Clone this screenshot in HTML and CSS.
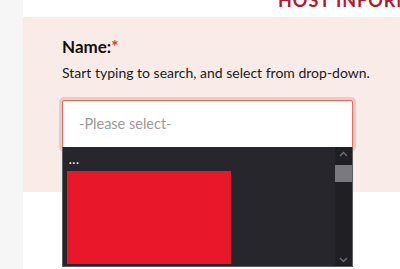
FILE: index.html
```html
<!DOCTYPE html>
<html lang="en">
<head>
    <meta charset="UTF-8">
    <meta name="viewport" content="width=device-width, initial-scale=1.0">
    <title>Host information</title>
    <link rel="stylesheet" href="styles.css">
</head>
<body>
    <div class="lateral"></div>

    <div class="principal">
        <div class="cabecera">
            <h2>Host Information</h2>
        </div>

        <!-- Bloque del campo nombre -->
        <div class="bloque-nombre">
            <label class="etiqueta">Name:<span class="obligatorio">*</span></label>
            <p class="ayuda">Start typing to search, and select from drop-down.</p>

            <div class="campo">
                <div class="entrada">-Please select-</div>

                <!-- Lista desplegable abierta -->
                <div class="desplegable">
                    <div class="lista">
                        <div class="puntos">...</div>
                        <div class="opcion-roja"></div>
                    </div>
                    <div class="barra">
                        <span class="flecha">
                            <svg width="9" height="6" viewBox="0 0 9 6"><path d="M1 5 L4.5 1.5 L8 5" fill="none" stroke="#6f6f74" stroke-width="1.4"/></svg>
                        </span>
                        <span class="pulgar"></span>
                        <span class="hueco"></span>
                        <span class="flecha">
                            <svg width="9" height="6" viewBox="0 0 9 6"><path d="M1 1 L4.5 4.5 L8 1" fill="none" stroke="#6f6f74" stroke-width="1.4"/></svg>
                        </span>
                    </div>
                </div>
            </div>
        </div>

        <div class="resto"></div>
    </div>
</body>
</html>
```

FILE: styles.css
```css
body {
    margin: 0;
    display: flex;
    height: 269px;
    overflow: hidden;
    font-family: Lato, "Open Sans", sans-serif;
    background-color: white;
}
.lateral {
    width: 23px;
    flex-shrink: 0;
    background-color: #f6f6f6;
}
.principal {
    flex: 1;
    display: flex;
    flex-direction: column;
    overflow: hidden;
}
.cabecera {
    height: 17px;
    overflow: hidden;
    padding-left: 255px;
}
.cabecera h2 {
    margin: -11px 0 0 0;
    font-size: 18px;
    font-weight: 700;
    letter-spacing: 1px;
    white-space: nowrap;
    text-transform: uppercase;
    color: #b3162f;
}
.bloque-nombre {
    background-color: #f9ebe8;
    height: 175px;
    padding: 20px 0 0 39px;
    box-sizing: border-box;
}
.etiqueta {
    display: block;
    font-size: 17px;
    font-weight: bold;
    color: #111;
    line-height: 20px;
}
.obligatorio {
    color: #c8442c;
}
.ayuda {
    margin: 7px 0 0 0;
    font-size: 14px;
    line-height: 17px;
    color: #1a1a1a;
}
.campo {
    position: relative;
    margin-top: 19px;
    width: 291px;
}
.entrada {
    height: 45px;
    border: 1px solid #e06b5c;
    box-shadow: 0 0 0 3px rgba(228, 160, 160, 0.45);
    border-radius: 2px;
    background-color: white;
    padding: 0 0 2px 16px;
    box-sizing: content-box;
    display: flex;
    align-items: center;
    font-size: 14.5px;
    color: #9a9a9a;
}
/* el desplegable queda por encima del resto */
.desplegable {
    position: absolute;
    top: 47px;
    left: 0;
    width: 291px;
    height: 120px;
    box-sizing: border-box;
    border: 1px solid #5c5c60;
    border-top: none;
    background-color: #26262c;
    display: flex;
}
.lista {
    flex: 1;
    padding: 7px 0 0 4px;
}
.puntos {
    color: white;
    font-size: 11px;
    line-height: 11px;
    height: 17px;
    font-weight: bold;
    letter-spacing: 1px;
    padding-left: 2px;
}
.opcion-roja {
    width: 164px;
    height: 93px;
    background-color: #e8172a;
}
.barra {
    width: 17px;
    background-color: #202024;
    display: flex;
    flex-direction: column;
}
.flecha {
    height: 13px;
    display: flex;
    align-items: center;
    justify-content: center;
}
.pulgar {
    margin-top: 5px;
    height: 17px;
    background-color: #7a7a7d;
}
.hueco {
    flex: 1;
}
.resto {
    flex: 1;
}
```
